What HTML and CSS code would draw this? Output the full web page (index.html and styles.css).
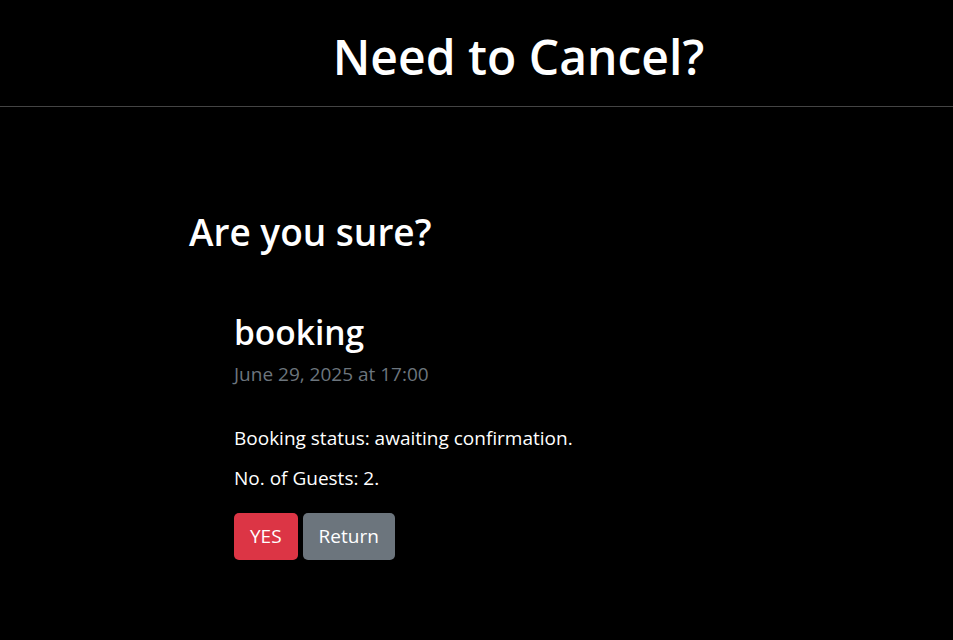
FILE: index.html
```html
<!DOCTYPE html>
<html lang="en">
<head>
<meta charset="utf-8">
<title>Need to Cancel?</title>
<link rel="stylesheet" href="styles.css">
</head>
<body>
<header class="site-header">
  <h1 class="page-title">Need to Cancel?</h1>
</header>
<main class="content">
  <h2 class="confirm-title">Are you sure?</h2>
  <section class="booking-card">
    <h3 class="booking-name">booking</h3>
    <p class="booking-date">June 29, 2025 at 17:00</p>
    <p class="booking-line booking-status">Booking status: awaiting confirmation.</p>
    <p class="booking-line booking-guests">No. of Guests: 2.</p>
    <div class="actions">
      <button class="btn btn-danger" type="button">YES</button>
      <button class="btn btn-secondary" type="button">Return</button>
    </div>
  </section>
</main>
</body>
</html>
```
FILE: styles.css
```css
html, body {
  margin: 0;
  padding: 0;
  background: #000;
  color: #fff;
  font-family: "Open Sans", "Noto Sans", sans-serif;
}
.site-header {
  box-sizing: border-box;
  height: 107px;
  border-bottom: 1px solid #444;
  display: flex;
  align-items: center;
  justify-content: center;
  padding: 8px 0 0 84px;
}
.page-title {
  margin: 0;
  font-size: 48px;
  font-weight: 600;
  line-height: 1.2;
}
.content {
  padding: 103px 0 0 189px;
}
.confirm-title {
  margin: 0;
  font-size: 37px;
  font-weight: 600;
  line-height: 1.2;
}
.booking-card {
  padding: 58px 0 0 45px;
}
.booking-name {
  margin: 0;
  font-size: 33.5px;
  font-weight: 600;
  line-height: 1.2;
}
.booking-date {
  margin: 7px 0 0;
  font-size: 19px;
  line-height: 1.5;
  color: #6c757d;
}
.booking-line {
  margin: 0;
  font-size: 19px;
  line-height: 1.5;
}
.booking-status {
  margin-top: 36px;
}
.booking-guests {
  margin-top: 11px;
}
.actions {
  display: flex;
  gap: 5px;
  margin-top: 21px;
}
.btn {
  font-family: inherit;
  font-size: 19px;
  line-height: 1.5;
  color: #fff;
  border: none;
  border-radius: 5px;
  height: 47px;
  padding: 0 16px;
}
.btn-danger { background: #dc3545; }
.btn-secondary { background: #6c757d; }
```
